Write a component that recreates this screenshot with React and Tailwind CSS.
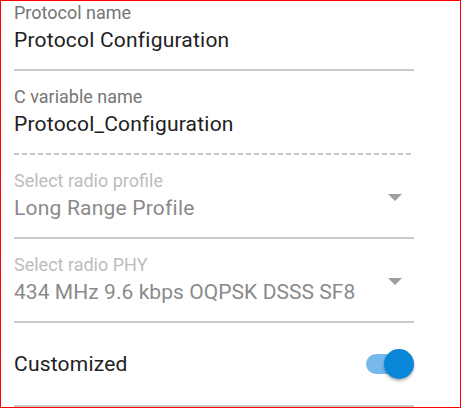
import React from "react";

function Caret() {
  return (
    <svg width="14" height="7" viewBox="0 0 14 7" className="shrink-0">
      <path d="M0 0 L14 0 L7 7 Z" fill="#9e9e9e" />
    </svg>
  );
}

function TextField({ label, value, dashed, disabled, select, first, tight }) {
  return (
    <div className={`relative h-[84px] ${first ? "-mt-[14px]" : ""}`}>
      <div className="flex h-[82px] items-start">
        <div className="flex-1">
          <div
            className={`mt-[17px] text-[18px] leading-none ${
              disabled ? "text-[#bdbdbd]" : "text-[#757575]"
            }`}
          >
            {label}
          </div>
          <div
            className={`mt-[8px] text-[21px] leading-none ${
              tight ? "tracking-[0.003em]" : "tracking-[0.01em]"
            } ${disabled ? "text-[#8a8a8a]" : "text-[#212121]"}`}
          >
            {value}
          </div>
        </div>
        {select && (
          <div className="mr-[12px] mt-[39px] flex">
            <Caret />
          </div>
        )}
      </div>
      {dashed ? (
        <div className="h-[2px] bg-[linear-gradient(to_right,#c8c8c8_5px,transparent_5px)] bg-[length:8px_2px]" />
      ) : (
        <div className="h-[2px] bg-[#cacaca]" />
      )}
    </div>
  );
}

export default function App() {
  return (
    <div
      className="h-[408px] w-[461px] overflow-hidden border border-[#ff0000] bg-white"
      style={{ fontFamily: "Roboto, 'Noto Sans', sans-serif" }}
    >
      <div className="w-[413px] pl-[13px]">
        <TextField first label="Protocol name" value="Protocol Configuration" />
        <TextField dashed label="C variable name" value="Protocol_Configuration" />
        <TextField disabled select label="Select radio profile" value="Long Range Profile" />
        <TextField disabled select tight label="Select radio PHY" value="434 MHz 9.6 kbps OQPSK DSSS SF8" />
        <div className="h-[84px]">
          <div className="flex h-[82px] items-center">
            <div className="flex-1 text-[21px] leading-none tracking-[0.01em] text-[#212121]">Customized</div>
            <div className="relative h-[30px] w-[48px]">
              <div className="absolute left-0 top-[5px] h-[20px] w-[36px] rounded-full bg-[#76b9ea]" />
              <div className="absolute right-0 top-0 h-[30px] w-[30px] rounded-full bg-[#0a86d8] shadow-[0_2px_3px_rgba(0,0,0,0.3)]" />
            </div>
          </div>
          <div className="h-[2px] bg-[#cacaca]" />
        </div>
      </div>
    </div>
  );
}
